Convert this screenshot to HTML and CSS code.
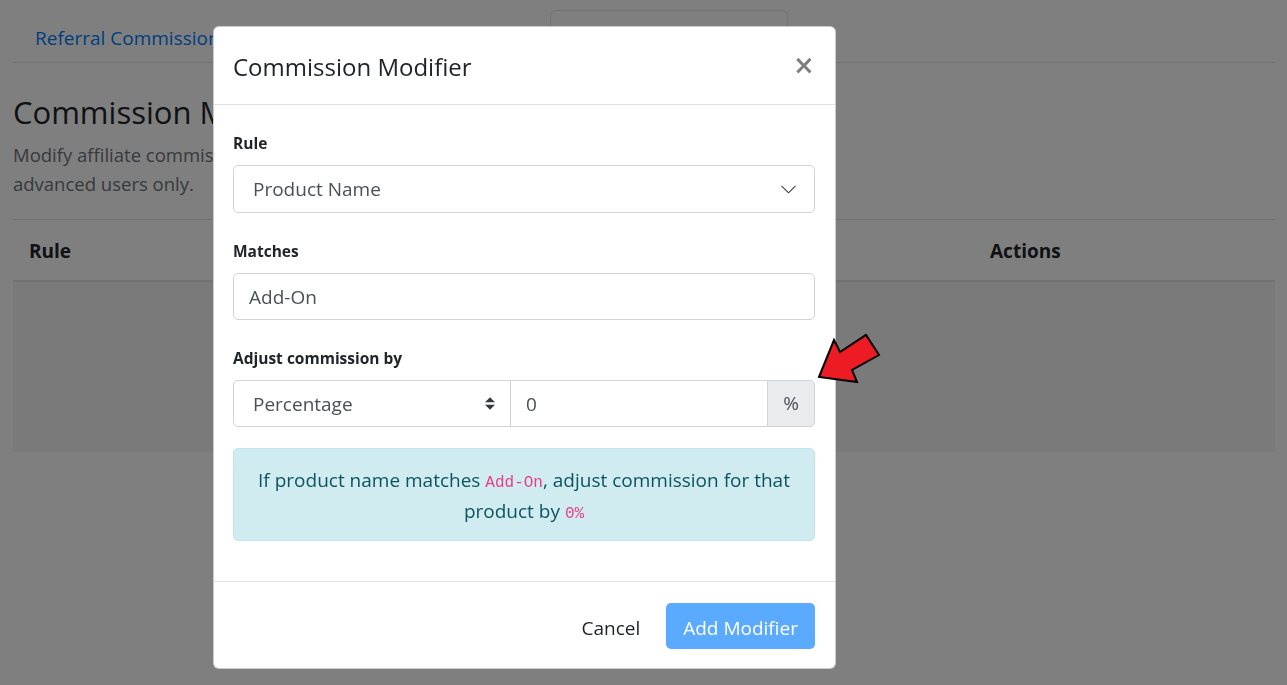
FILE: index.html
```html
<!DOCTYPE html>
<html lang="en">
<head>
<meta charset="utf-8">
<title>Commission Modifier</title>
<link rel="stylesheet" href="styles.css">
</head>
<body>
<div class="page">
  <nav class="tabs">
    <a class="tab" href="#">Referral Commissions</a>
    <a class="tab tab-mid" href="#">Recurring Commissions</a>
    <a class="tab tab-active" href="#">Commission Modifiers</a>
  </nav>

  <h3 class="page-title">Commission Modifiers</h3>
  <p class="page-lead">Modify affiliate commissions based on product name. Intended for<br>advanced users only.</p>

  <div class="table">
    <div class="thead">
      <div class="th th-rule">Rule</div>
      <div class="th th-match">Matches</div>
      <div class="th th-actions">Actions</div>
    </div>
    <div class="tbody"></div>
  </div>
</div>

<div class="backdrop"></div>

<div class="modal">
  <div class="modal-header">
    <h5 class="modal-title">Commission Modifier</h5>
    <button class="close" type="button">×</button>
  </div>
  <div class="modal-body">
    <div class="form-group">
      <label class="label">Rule</label>
      <div class="control select-native">
        <span>Product Name</span>
        <svg class="chev" width="15" height="9" viewBox="0 0 15 9"><path d="M0.5 0.8 L7.5 7.8 L14.5 0.8" fill="none" stroke="#3a3a3a" stroke-width="1.1"/></svg>
      </div>
    </div>
    <div class="form-group">
      <label class="label">Matches</label>
      <div class="control input">Add-On</div>
    </div>
    <div class="form-group fg-last">
      <label class="label">Adjust commission by</label>
      <div class="input-group">
        <div class="control ig-select">
          <span>Percentage</span>
          <svg class="sort" width="10" height="13" viewBox="0 0 4 5"><path d="M2 0L0 2h4zm0 5L0 3h4z" fill="#343a40"/></svg>
        </div>
        <div class="control ig-input">0</div>
        <div class="ig-append">%</div>
      </div>
    </div>
    <div class="alert">If product name matches <code>Add-On</code>, adjust commission for that product by <code>0%</code></div>
  </div>
  <div class="modal-footer">
    <button class="btn btn-link" type="button">Cancel</button>
    <button class="btn btn-primary" type="button">Add Modifier</button>
  </div>
</div>

<svg class="arrow" width="80" height="60" viewBox="810 328 80 60">
  <polygon points="819,377 834,340 840,352 866,335 879,355 852,370 857,382" fill="#ed1c24" stroke="#000" stroke-width="2" stroke-linejoin="miter"/>
</svg>
</body>
</html>
```
FILE: styles.css
```css
* { box-sizing: border-box; }

html, body {
  margin: 0;
  padding: 0;
  background: #fff;
  font-family: "Open Sans", "Noto Sans", sans-serif;
  color: #212529;
  font-size: 20px;
  line-height: 1.5;
  overflow: hidden;
  height: 685px;
}

.page {
  padding: 10px 12px 0 13px;
}

/* tabs */
.tabs {
  display: flex;
  height: 53px;
  border-bottom: 1px solid #dee2e6;
}
.tab {
  display: block;
  padding: 12px 21px 8px;
  line-height: 30px;
  color: #007bff;
  text-decoration: none;
  font-size: 19px;
  border: 1px solid transparent;
  white-space: nowrap;
}
.tab-mid { width: 287px; overflow: hidden; }
.tab-active {
  width: 238px;
  margin-left: auto;
  margin-right: 487px;
  color: #495057;
  border-color: #dee2e6 #dee2e6 #fff;
  border-radius: 6px 6px 0 0;
  height: 53px;
  overflow: hidden;
}

.page-title {
  margin: 28px 0 0;
  font-size: 31px;
  font-weight: 400;
  line-height: 42px;
}
.page-lead {
  margin: 7px 0 0;
  font-size: 18.5px;
  line-height: 29px;
  color: #6c757d;
}

/* table */
.table {
  margin-top: 21px;
  border-top: 1px solid #dee2e6;
}
.thead {
  display: flex;
  border-bottom: 2px solid #dee2e6;
}
.th {
  padding: 16px 16px 14px;
  line-height: 30px;
  font-weight: 700;
  font-size: 19px;
}
.th-rule { width: 200px; }
.th-match { width: 761px; }
.tbody {
  height: 170px;
  background: #f4f4f4;
}

.backdrop {
  position: fixed;
  inset: 0;
  background: rgba(0, 0, 0, 0.5);
}

/* modal */
.modal {
  position: absolute;
  left: 213px;
  top: 26px;
  width: 623px;
  background: #fff;
  border: 1px solid rgba(0, 0, 0, 0.2);
  border-radius: 6px;
  display: flex;
  flex-direction: column;
}
.modal-header {
  display: flex;
  align-items: flex-start;
  justify-content: space-between;
  padding: 21px 20px 18px 19px;
  border-bottom: 1px solid #dee2e6;
}
.modal-title {
  margin: 0;
  font-size: 24px;
  font-weight: 400;
  line-height: 38px;
}
.close {
  background: none;
  border: 0;
  padding: 0;
  margin: -1px 2px 0 0;
  width: 20px;
  text-align: center;
  font-family: "DejaVu Sans", sans-serif;
  font-size: 26px;
  line-height: 36px;
  font-weight: 700;
  color: #000;
  opacity: 0.5;
  cursor: pointer;
}

.modal-body {
  padding: 20px 20px 19px 19px;
}
.form-group {
  margin-bottom: 20px;
}
.fg-last { margin-bottom: 21px; }
.label {
  display: block;
  font-size: 15.5px;
  font-weight: 700;
  line-height: 26px;
  padding-top: 5px;
  margin-bottom: 9px;
}

.control {
  height: 47px;
  border: 1px solid #ced4da;
  border-radius: 5px;
  background: #fff;
  color: #495057;
  font-size: 19px;
  line-height: 30px;
  padding: 7.5px 15px;
  display: flex;
  align-items: center;
}
.select-native {
  height: 48px;
  padding-left: 19px;
  justify-content: space-between;
  padding-right: 18px;
}
.chev { display: block; }

.input-group {
  display: flex;
}
.ig-select {
  width: 278px;
  padding-left: 19px;
  padding-right: 15px;
  justify-content: space-between;
  border-radius: 5px 0 0 5px;
}
.ig-input {
  flex: 1;
  margin-left: -1px;
  border-radius: 0;
  padding-left: 15px;
}
.ig-append {
  width: 48px;
  margin-left: -1px;
  height: 47px;
  border: 1px solid #ced4da;
  border-radius: 0 5px 5px 0;
  background: #e9ecef;
  color: #495057;
  font-size: 19px;
  display: flex;
  align-items: center;
  justify-content: center;
}

.alert {
  padding: 16px 24px 13px;
  background: #d1ecf1;
  border: 1px solid #bee5eb;
  border-radius: 5px;
  color: #0c5460;
  text-align: center;
  font-size: 19px;
  line-height: 31px;
  margin-bottom: 21px;
}
code {
  font-family: "Liberation Mono", "DejaVu Sans Mono", monospace;
  font-size: 16px;
  line-height: 1;
  color: #e83e8c;
}

.modal-footer {
  display: flex;
  justify-content: flex-end;
  align-items: center;
  padding: 21px 20px 19px;
  border-top: 1px solid #dee2e6;
}
.btn {
  font-family: inherit;
  font-size: 19px;
  line-height: 30px;
  height: 46px;
  padding: 9px 15px 5px;
  border: 1px solid transparent;
  border-radius: 5px;
  cursor: pointer;
  white-space: nowrap;
}
.btn-link {
  background: none;
  color: #212529;
  margin-right: 10px;
}
.btn-primary {
  background: #5aabff;
  color: #fff;
  padding: 9px 16px 5px;
}

.arrow {
  position: absolute;
  left: 810px;
  top: 328px;
}
```
